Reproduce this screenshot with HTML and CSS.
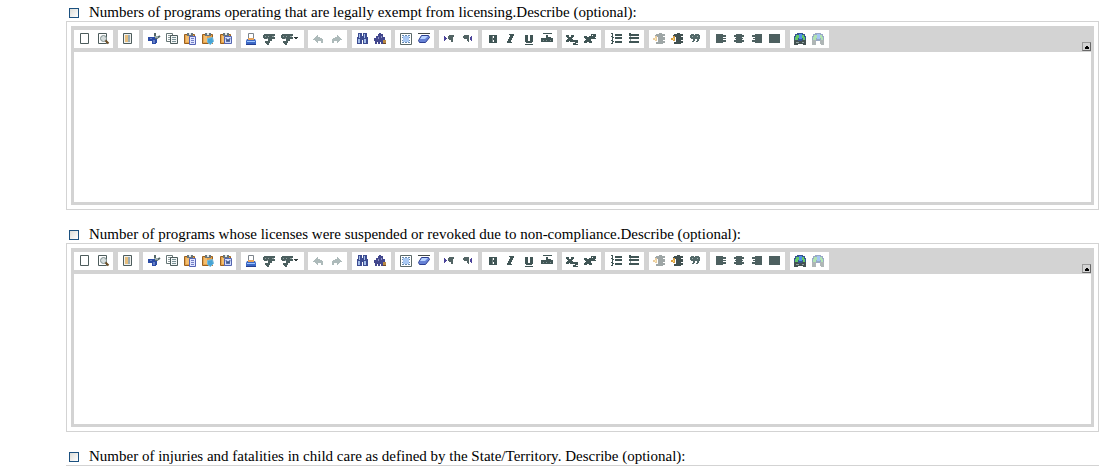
FILE: index.html
```html
<!DOCTYPE html>
<html lang="en">
<head>
<meta charset="utf-8">
<title>Program data</title>
<link rel="stylesheet" href="styles.css">
</head>
<body>
<svg class="sprite" aria-hidden="true">
  <symbol id="new" viewBox="0 0 18 18"><path fill="#fff" stroke="#4d5c5c" d="M4.5 3.5h8v10h-8z"/></symbol>
  <symbol id="preview" viewBox="0 0 18 18"><path fill="#fff" stroke="#4d5c5c" d="M4.5 3.5h8v10h-8z"/><circle cx="9.5" cy="8.5" r="3" fill="#d5dcdc" stroke="#809090"/><path stroke="#6b4d25" stroke-width="2" d="M11.5 10.5l3 3"/></symbol>
  <symbol id="template" viewBox="0 0 18 18"><path fill="#eef0ee" stroke="#4d5c5c" d="M3.5 3.5h8v10h-8z"/><path fill="#e6bd7c" d="M5 5h3v7H5z"/><path fill="#9aacb5" d="M8 5h2v7H8z"/></symbol>
  <symbol id="cut" viewBox="0 0 18 18"><path stroke="#566868" stroke-width="2" d="M10 3v5M15 6l-6 4"/><path fill="#9aabab" d="M9 6h4v2H9z"/><path fill="#2b4ba5" d="M3 7h7v2h2v4h-1v1H7v-3H3z"/><path fill="#6680c8" d="M8 10h2v3H8zM5 8h2v1H5z"/></symbol>
  <symbol id="copy" viewBox="0 0 18 18"><path fill="#fff" stroke="#657575" d="M3.5 3.5h6v8h-6z"/><path stroke="#91a1a1" d="M5 5.5h3M5 7.5h3M5 9.5h2"/><path fill="#f2f5f5" stroke="#4d5c5c" d="M7.5 5.5h7v8h-7z"/><path stroke="#799195" d="M9 7.5h4M9 9.5h4M9 11.5h4"/></symbol>
  <symbol id="clip" viewBox="0 0 18 18"><path fill="#e7a34a" stroke="#99601f" d="M3.5 4.5h10v9h-10z"/><path fill="#f3be70" d="M5 6h3v6H5z"/><path fill="#68757a" d="M6 3h6v3H6z"/><path fill="#e2e7e7" d="M8 3h2v2H8z"/></symbol>
  <symbol id="paste" viewBox="0 0 18 18"><use href="#clip"/><path fill="#dfe5ff" stroke="#5563b5" d="M8.5 6.5h6v8h-6z"/><path stroke="#7580c5" d="M10 8.5h3M10 10.5h3M10 12.5h3"/></symbol>
  <symbol id="pastetext" viewBox="0 0 18 18"><use href="#clip"/><path fill="#46a4d4" stroke="#79bbdd" d="M8.5 8.5l5-1 1 4-3 3-3-2z"/></symbol>
  <symbol id="pasteword" viewBox="0 0 18 18"><use href="#clip"/><path fill="#d0dcff" stroke="#5364ae" d="M7.5 6.5h7v7h-7z"/><path fill="none" stroke="#3e558b" d="M9 8l1 4 1-3 1 3 1-4"/></symbol>
  <symbol id="print" viewBox="0 0 18 18"><path fill="#fff" stroke="#7d858c" d="M5.500 3.500h5v6h-5z"/><path fill="#e5a25b" d="M5 8h6v2H5z"/><path fill="#3c68c5" d="M4 9h1v1h6V9h1l1 2v4H3v-4z"/><path fill="#9ec6ff" d="M4 11h8v1H4z"/><path fill="#253f91" d="M3 14h10v1H3z"/></symbol>
  <symbol id="spell" viewBox="0 0 18 18"><path fill="#4b5f5f" d="M3 4h11v2h-1v1h1v2h-3v2H9v2H8v2H6v-1H5v-1H4v-2h3V9H3V8H2V5h1z"/><path fill="#91a1a1" d="M4 6h1v1H4zM7 6h1v1H7zM11 6h2v1h-2zM6 8h1v1H6z"/></symbol>
  <symbol id="spellmenu" viewBox="0 0 24 18"><use href="#spell" width="18" height="18"/><path fill="#313c3c" d="M15 7h4v1h-1v1h-2V8h-1z"/></symbol>
  <symbol id="undo" viewBox="0 0 18 18"><path fill="#adbaba" d="M3 9h1V8h1V7h1V6h1V5h1v2h2v1h2v1h1v4h-2v-2H8v2H7v-1H6v-1H5v-1H3z"/></symbol>
  <symbol id="redo" viewBox="0 0 18 18"><path fill="#adbaba" d="M14 9h-1V8h-1V7h-1V6h-1V5H9v2H7v1H5v1H4v4h2v-2h3v2h1v-1h1v-1h1v-1h2z"/></symbol>
  <symbol id="find" viewBox="0 0 18 18"><path fill="#3d4c91" d="M4 3h4v3h1V3h4v4h1v7H9v-4H8v4H3V7h1z"/><path fill="#a2bde9" d="M5 4h1v4H5zM10 4h1v4h-1zM4 9h2v4H4zM10 9h2v4h-2z"/></symbol>
  <symbol id="replace" viewBox="0 0 18 18"><path fill="#42478d" d="M7 3h2v1h2v3h2v3h-1v4H9v-2H8v2H6v-2H5v2H3v-3H2V8h2V6h2V4h1z"/><path fill="#8d91c7" d="M6 7h1v2H6zM9 6h1v2H9z"/><path fill="#ba8a42" d="M11 10h3v4h-3z"/><path fill="#6c482a" d="M11 13h3v1h-3z"/></symbol>
  <symbol id="selectall" viewBox="0 0 18 18"><path fill="#fff" stroke="#5a6868" d="M3.500 3.500h11v11h-11z"/><path fill="#a9c8f3" d="M6 6h6v6H6z"/><path fill="#668bb0" d="M5 5h2v1H5zM8 5h2v1H8zM11 5h2v1h-2zM5 12h2v1H5zM8 12h2v1H8zM11 12h2v1h-2zM5 7h1v1H5zM5 10h1v1H5zM12 7h1v1h-1zM12 10h1v1h-1z"/></symbol>
  <symbol id="erase" viewBox="0 0 18 18"><path fill="#414747" d="M3 3h12v1H3z"/><path fill="#6681d5" stroke="#2c3f91" d="M6.500 5.500h7l1 2-4 5h-6l-1-2z"/><path fill="#b6d1ff" d="M7 6h6l-3 3H5z"/></symbol>
  <symbol id="ltr" viewBox="0 0 18 18"><path fill="#4b439a" d="M3 6h1v1h1v1h1v1H5v1H4v1H3z"/><path fill="#526464" d="M8 5h5v2h-1v5h-2v-2H8V9H7V6h1z"/></symbol>
  <symbol id="rtl" viewBox="0 0 18 18"><path fill="#4b439a" d="M13 6h-1v1h-1v3h1v1h1z"/><path fill="#526464" d="M5 5h5v7H9v-1H8V9H5V8H4V6h1z"/></symbol>
  <symbol id="bold" viewBox="0 0 18 18"><path fill="#405555" fill-rule="evenodd" d="M5 5h8v8H5zM9 6v2h1V6zM9 10v2h1v-2z"/><path fill="#738282" d="M8 6h1v6H8z"/></symbol>
  <symbol id="italic" viewBox="0 0 18 18"><path fill="#405555" d="M7 4h5v2h-1v2h-1v2H9v2h1v1H5v-2h1V9h1V7h1V5H7z"/></symbol>
  <symbol id="underline" viewBox="0 0 18 18"><path fill="#405555" d="M5 5h3v6h2V5h3v7h-1v1H6v-1H5zM5 14h8v1H5z"/></symbol>
  <symbol id="strike" viewBox="0 0 18 18"><path fill="#405555" d="M5 3h9v1H5zM8 5h2v2h3v1h2v4H3V8h5z"/><path fill="#829393" d="M5 10h1v1H5zM8 10h1v1H8zM12 10h1v1h-1z"/></symbol>
  <symbol id="sub" viewBox="0 0 18 18"><path fill="#405555" d="M2 5h3v2h2V5h3v2H9v1H8v1h1v1h5v3h-2v1h2v1H9v-2h2v-1H6v-1H5v1H2v-2h1V9h1V8H3V7H2z"/></symbol>
  <symbol id="sup" viewBox="0 0 18 18"><path fill="#405555" d="M2 6h3v1h2V6h2V4h5v3h-1v1h1v1H9v2h1v2H7v-1H5v1H2v-2h1v-1h1V9H3V8H2z"/><path fill="#fff" d="M10 5h1v1h-1z"/></symbol>
  <symbol id="ol" viewBox="0 0 18 18"><path fill="#405555" d="M4 3h2v4h1v1H6v3h1v1H6v2H4v-1h1v-2H4v-1h1V7H4V6h1V4H4zM8 4h7v2H8zM8 7h7v2H8zM8 11h7v2H8z"/></symbol>
  <symbol id="ul" viewBox="0 0 18 18"><path fill="#405555" d="M4 3h2v1h8v2H4zM4 7h10v2H4zM4 11h10v2H4z"/><path fill="#8c9b9b" d="M5 6h1v1H5zM5 9h1v2H5z"/></symbol>
  <symbol id="indent" viewBox="0 0 18 18"><path fill="#405050" d="M5 4h3V3h3v1h3v2h-2v1h2v3h-2v1h2v2h-2v1H5v-2h2V7H4V5h1z"/><path fill="#d79d45" d="M2 8h2V6h2v5H4v-1H2z"/><path fill="#ffda66" d="M4 8h1v2H4z"/></symbol>
  <symbol id="quote" viewBox="0 0 18 18"><path fill="#536969" d="M4 4h3v1h1V4h4v1h1v4h-1v2h-1v1H9v-1h1V9H8v2H7v1H5v-1h1V9H4V8H3V5h1z"/><path fill="#9eafaf" d="M5 6h1v1H5zM10 6h1v1h-1z"/></symbol>
  <symbol id="left" viewBox="0 0 18 18"><path fill="#4d6060" d="M4 4h7v1h3v2h-3v1h3v1h-3v1h3v2h-3v1H4z"/></symbol>
  <symbol id="center" viewBox="0 0 18 18"><path fill="#4d6060" d="M6 4h6v1h2v2h-2v1h1v1h-1v1h2v2h-2v1H6v-1H4v-2h2V9H5V8h1V7H4V5h2z"/></symbol>
  <symbol id="right" viewBox="0 0 18 18"><path fill="#4d6060" d="M14 4H7v1H4v2h3v1H5v1h2v1H4v2h3v1h7z"/></symbol>
  <symbol id="justify" viewBox="0 0 18 18"><path fill="#4d6060" d="M3 4h11v9H3z"/></symbol>
  <symbol id="link" viewBox="0 0 18 18"><path fill="#35558f" d="M5 3h6v1h2v2h1v5H2V6h1V4h2z"/><path fill="#64c866" d="M4 5h3v3H6v2H3V7h1zM10 5h2v2h1v3h-2V8h-1z"/><path fill="#4c8fe8" d="M7 4h3v5H7z"/><path fill="#445252" d="M2 10h4v1h4v-1h4v5h-3v-1H6v1H2z"/><path fill="#8fa0a0" d="M4 12h3v1H4zM10 12h2v1h-2z"/></symbol>
  <symbol id="unlink" viewBox="0 0 18 18"><path fill="#35558f" d="M5 3h6v1h2v2h1v5H2V6h1V4h2z"/><path fill="#64c866" d="M4 5h3v3H6v2H3V7h1zM10 5h2v2h1v3h-2V8h-1z"/><path fill="#4c8fe8" d="M7 4h3v5H7z"/><path fill="#627070" d="M2 10h4v5H2zM10 10h4v5h-3v-1h-1z"/></symbol>
</svg>
<main class="form">
  <section class="item">
    <label class="question"><input class="check" type="checkbox"><span>Numbers of programs operating that are legally exempt from licensing.Describe (optional):</span></label>
    <div class="frame open"></div>
  </section>
  <section class="item">
    <label class="question"><input class="check" type="checkbox"><span>Number of programs whose licenses were suspended or revoked due to non-compliance.Describe (optional):</span></label>
    <div class="frame open"></div>
  </section>
  <section class="item">
    <label class="question"><input class="check" type="checkbox"><span>Number of injuries and fatalities in child care as defined by the State/Territory. Describe (optional):</span></label>
    <div class="frame"></div>
  </section>
</main>
<script src="editor.js"></script>
</body>
</html>
```
FILE: styles.css
```css
body {
  margin: 0;
  background: #fff;
  color: #000;
  font: 15px/18px "Liberation Serif", "Times New Roman", serif;
}

.sprite {
  display: none;
}

.form {
  display: flex;
  flex-direction: column;
  gap: 15px;
  padding: 3px 1px 0 66px;
}

.question {
  display: flex;
  align-items: center;
  gap: 10px;
  padding-left: 3px;
  white-space: nowrap;
}

.check {
  appearance: none;
  flex: none;
  width: 10px;
  height: 10px;
  margin: 2px 0 0;
  border: 1px solid #1c5180;
  background: linear-gradient(135deg, #dcdcd7, #fff);
}

.check:checked {
  background: #21a121;
}

.frame {
  border-top: 1px solid #d3d3d3;
}

.frame.open {
  border: 1px solid #d3d3d3;
  padding: 4px;
}

.editor {
  display: flex;
  flex-direction: column;
  padding: 0 3px 3px;
  background: #d3d3d3;
}

.toolbar {
  display: flex;
  justify-content: space-between;
  align-items: flex-end;
  padding: 4px 0 1px;
}

.groups {
  display: flex;
  gap: 4px;
  padding-bottom: 3px;
}

.group {
  display: flex;
  padding: 0 1px 0 2px;
  background: #fff;
}

.group:nth-child(odd) {
  margin-right: 1px;
}

.tool {
  width: 18px;
  height: 18px;
  padding: 0;
  border: 0;
  background: none;
}

.tool.wide {
  width: 24px;
}

.tool svg {
  display: block;
  width: 100%;
  height: 18px;
  fill: none;
}

.tool.faded {
  opacity: 0.5;
}

.collapse {
  display: flex;
  align-items: flex-end;
  justify-content: flex-end;
  width: 9px;
  height: 9px;
  padding: 1px;
  border: 1px solid #696969;
  border-top-color: #999;
  border-left-color: #999;
  background: #d3d3d3;
}

.collapse svg {
  width: 4px;
  height: 3px;
}

.text {
  box-sizing: border-box;
  height: 150px;
  padding: 8px;
  border: 0;
  outline: 0;
  resize: none;
  background: #fff;
  font: inherit;
}
```
FILE: editor.js
```js
const groups = [
  ["new", "preview"],
  ["template"],
  ["cut", "copy", "paste", "pastetext", "pasteword"],
  ["print", "spell", "spellmenu"],
  ["undo", "redo"],
  ["find", "replace"],
  ["selectall", "erase"],
  ["ltr", "rtl"],
  ["bold", "italic", "underline", "strike"],
  ["sub", "sup"],
  ["ol", "ul"],
  ["outdent", "indent", "quote"],
  ["left", "center", "right", "justify"],
  ["link", "unlink"]
];
const faded = { outdent: "indent", unlink: "unlink" };

function tool(name) {
  const extra = name === "spellmenu" ? " wide" : name in faded ? " faded" : "";
  return `<button type="button" class="tool${extra}" aria-label="${name}"><svg><use href="#${faded[name] || name}"/></svg></button>`;
}

const bar = groups.map(g => `<div class="group">${g.map(tool).join("")}</div>`).join("");

document.querySelectorAll(".item").forEach(item => {
  const frame = item.querySelector(".frame.open");
  if (!frame) return;
  const title = item.querySelector(".question span").textContent;
  frame.innerHTML = `<div class="editor">
    <div class="toolbar"><div class="groups">${bar}</div>
      <button type="button" class="collapse" aria-label="Collapse toolbar"><svg viewBox="0 0 4 3"><path d="M1 0h2v1h1v2H0V1h1z"/></svg></button>
    </div>
    <textarea class="text" aria-label="${title}"></textarea>
  </div>`;
});
```
